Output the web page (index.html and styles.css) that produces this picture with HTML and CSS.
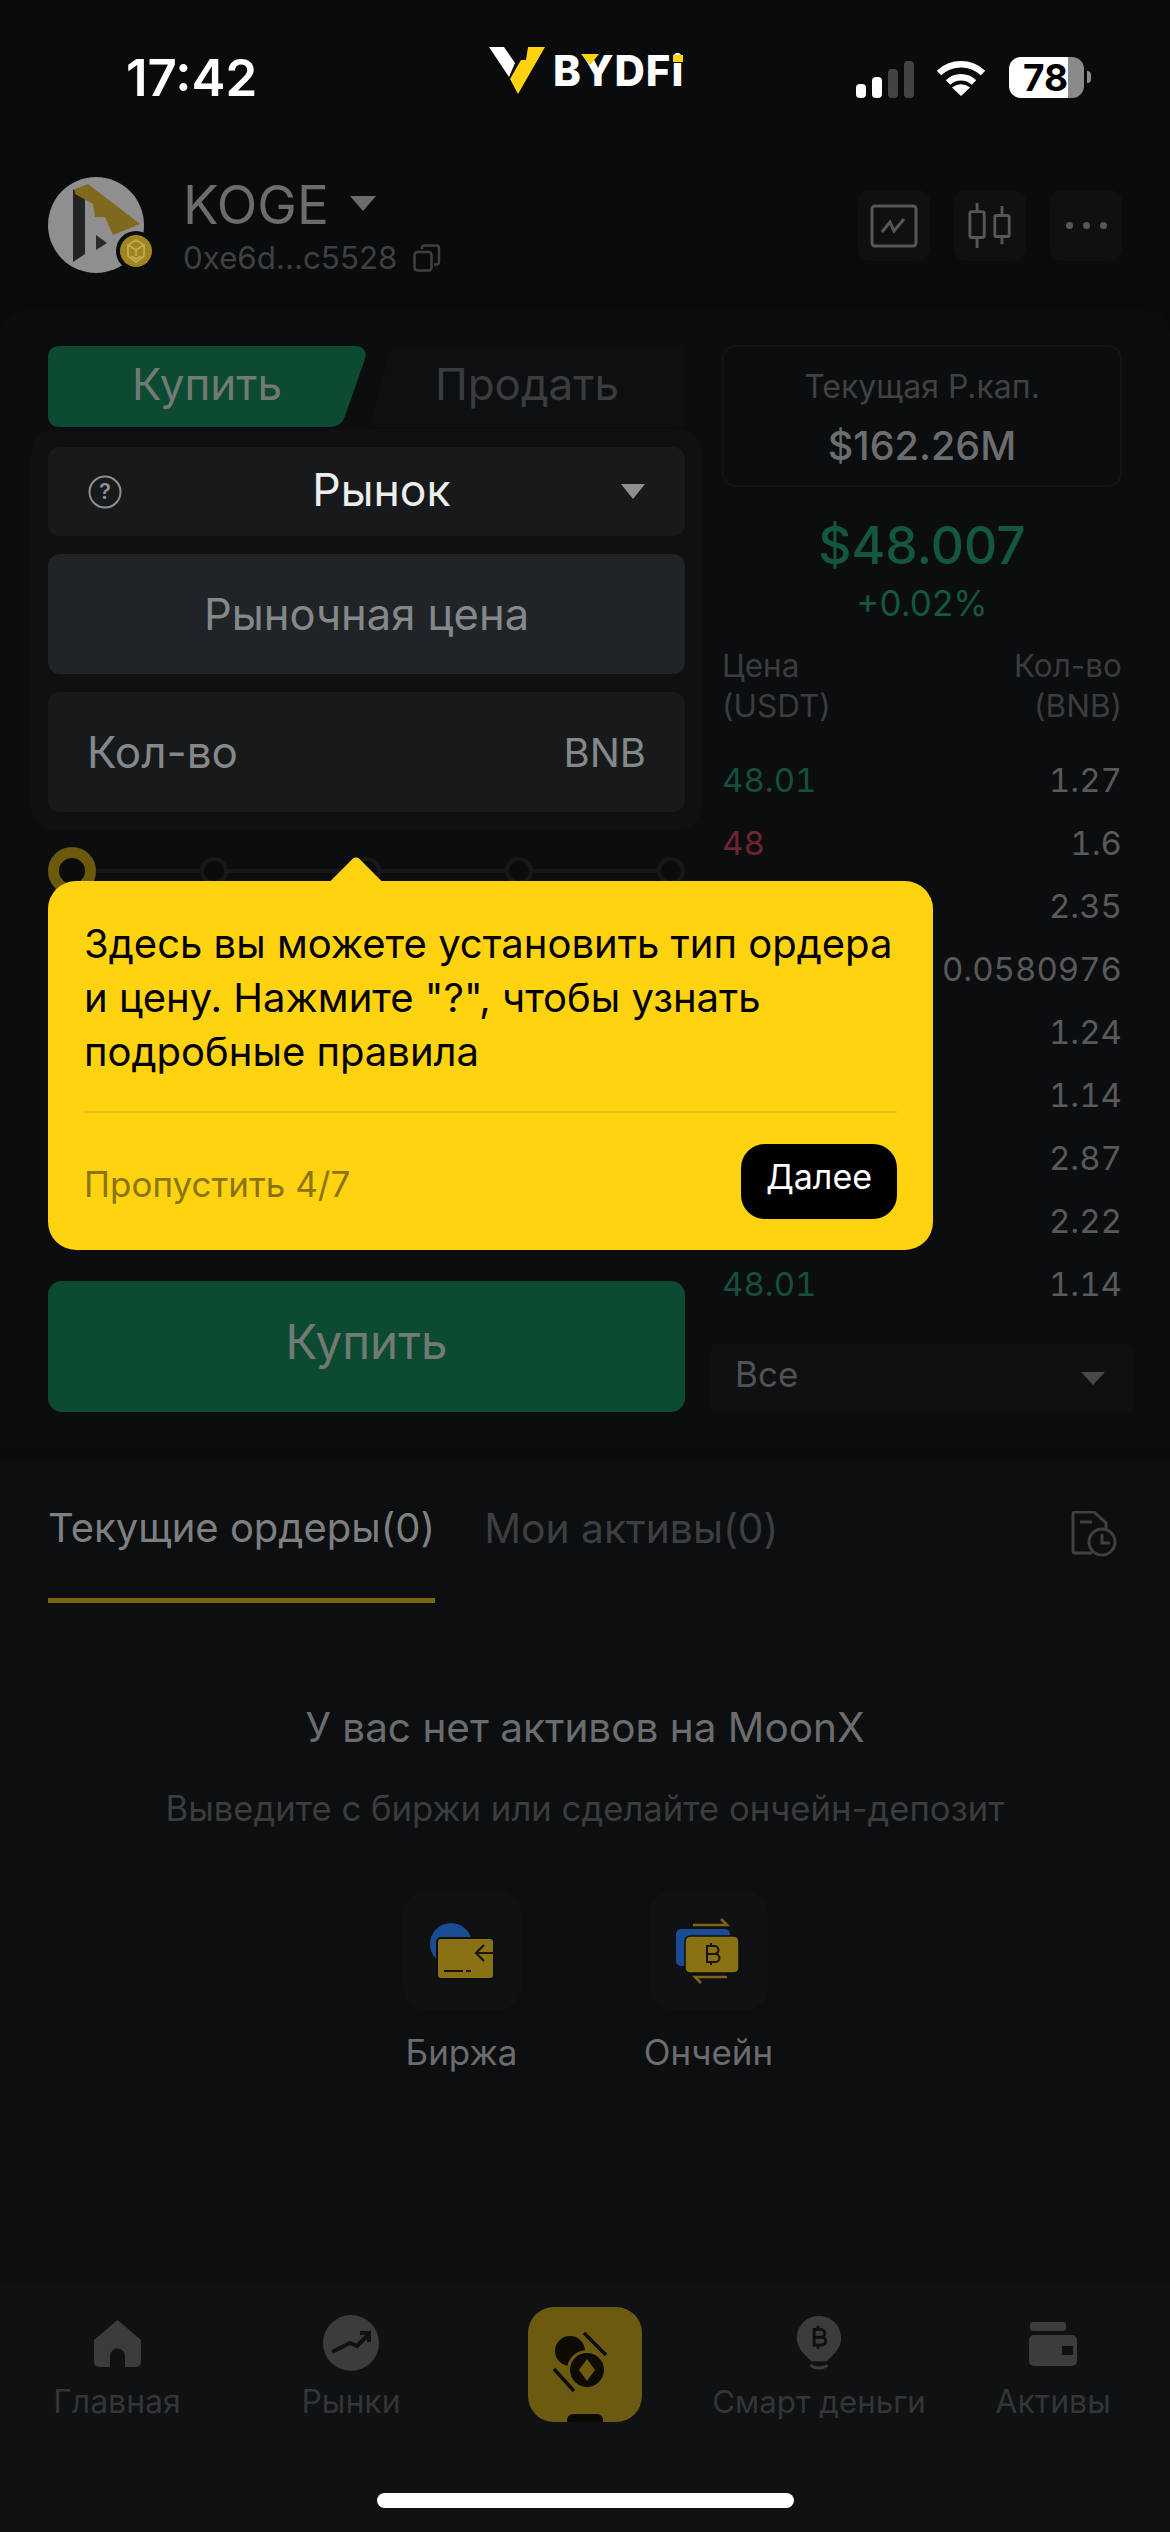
FILE: index.html
```html
<!DOCTYPE html>
<html lang="ru">
<head>
<meta charset="utf-8">
<title>BYDFi</title>
<link rel="stylesheet" href="styles.css">
</head>
<body>
<div class="screen">
  <div class="status">
    <div class="time">17:42</div>
    <div class="logo">
      <svg class="logo-mark" viewBox="0 0 56 48"><polygon fill="#fff" points="0,1 15,1 26,17 20,31"/><polygon fill="#ffd30f" points="39,1 56,1 29,48 21,33 32,14 37,14"/></svg>
      <span class="logo-text">BYDFi</span>
      <svg class="logo-y" viewBox="0 0 18 11"><polygon fill="#ffd30f" points="0,0 18,0 9,11"/></svg>
      <i class="logo-dot"></i>
    </div>
    <div class="sys">
      <div class="bars"><i class="b1"></i><i class="b2"></i><i class="b3"></i><i class="b4"></i></div>
      <svg class="wifi" viewBox="0 0 50 38"><path d="M3 15A32 32 0 0 1 47 15M12 24.500A19 19 0 0 1 38 24.500" fill="none" stroke="#fff" stroke-width="6.500"/><path d="M25 38L16 29.500Q25 23 34 29.500Z" fill="#fff"/></svg>
      <div class="battery"><span class="battery-num">78</span></div>
      <i class="nub"></i>
    </div>
  </div>

  <header class="head">
    <div class="avatar">
      <svg class="avatar-img" viewBox="0 0 96 96"><circle cx="48" cy="48" r="48" fill="#8f8f8f"/><polygon fill="#232323" points="25,12 37,22 37,77 25,85"/><polygon fill="#7f6a1c" points="27,12 40,7 92,47 65,58 57,40 47,40 45,27 27,17"/><polygon fill="#2b2b2b" points="48,58 59,66 48,73"/></svg>
      <svg class="badge" viewBox="0 0 40 40"><circle cx="20" cy="20" r="20" fill="#0a0b0c"/><circle cx="20" cy="20" r="16" fill="#9f8420"/><path d="M20 9l8 5v11l-8 6-8-6V14zM12 14l8 5 8-5M20 19v6M15 25l5 3 5-3" fill="none" stroke="#c3ab52" stroke-width="1.800"/></svg>
    </div>
    <div class="coin">
      <div class="coin-row"><span class="coin-name">KOGE</span><i class="tri tri-coin"></i></div>
      <div class="coin-row addr-row"><span class="addr">0xe6d...c5528</span>
        <svg class="copy" viewBox="0 0 28 28"><rect x="1.500" y="8" width="17" height="18.500" rx="3" fill="none" stroke="#3e4042" stroke-width="2.500"/><path d="M9 5V4a2.500 2.500 0 0 1 2.500-2.500h12A2.500 2.500 0 0 1 26 4v14a2.500 2.500 0 0 1-2.500 2.500H21" fill="none" stroke="#3e4042" stroke-width="2.500"/></svg>
      </div>
    </div>
    <div class="tools">
      <div class="tool"><svg viewBox="0 0 48 44"><rect x="2" y="2" width="44" height="40" rx="3" fill="none" stroke="#55575a" stroke-width="3"/><path d="M12 28L20 18L24 27L34 15" fill="none" stroke="#55575a" stroke-width="3"/></svg></div>
      <div class="tool"><svg viewBox="0 0 48 48"><g fill="none" stroke="#55575a" stroke-width="3"><rect x="3" y="9" width="15" height="27" rx="2"/><rect x="29" y="13" width="15" height="22" rx="2"/><path d="M10.500 0V9M10.500 36V47M36.500 3V13M36.500 35V43"/></g></svg></div>
      <div class="tool tool-dots"><i></i><i></i><i></i></div>
    </div>
  </header>

  <section class="panel">
    <div class="left">
      <div class="side-tabs">
        <div class="tab-buy">Купить</div>
        <div class="tab-sell">Продать</div>
      </div>
      <div class="form">
        <div class="market">
          <svg class="help" viewBox="0 0 34 34"><circle cx="17" cy="17" r="15.500" fill="none" stroke="#8d9092" stroke-width="2"/><text x="17" y="24" text-anchor="middle" class="help-q">?</text></svg>
          <span class="market-name">Рынок</span>
          <i class="tri tri-market"></i>
        </div>
        <div class="field field-price">Рыночная цена</div>
        <div class="field field-qty"><span>Кол-во</span><span class="unit">BNB</span></div>
      </div>
      <div class="slider">
        <i class="ring"></i><i class="dot"></i><i class="dot"></i><i class="dot"></i><i class="dot"></i>
      </div>
      <div class="buy-btn">Купить</div>
    </div>

    <div class="right">
      <div class="mcap">
        <div class="mcap-label">Текущая Р.кап.</div>
        <div class="mcap-value">$162.26M</div>
      </div>
      <div class="price">$48.007</div>
      <div class="change">+0.02%</div>
      <div class="book-head">
        <div>Цена<br>(USDT)</div>
        <div class="num">Кол-во<br>(BNB)</div>
      </div>
      <div class="book">
        <div class="row"><span class="up">48.01</span><span>1.27</span></div>
        <div class="row"><span class="down">48</span><span>1.6</span></div>
        <div class="row row-end"><span>2.35</span></div>
        <div class="row row-end"><span>0.0580976</span></div>
        <div class="row row-end"><span>1.24</span></div>
        <div class="row row-end"><span>1.14</span></div>
        <div class="row row-end"><span>2.87</span></div>
        <div class="row row-end"><span>2.22</span></div>
        <div class="row"><span class="up">48.01</span><span>1.14</span></div>
      </div>
      <div class="select"><span>Все</span><i class="tri tri-select"></i></div>
    </div>

    <div class="tip">
      <p class="tip-text">Здесь вы можете установить тип ордера<br>и цену. Нажмите "?", чтобы узнать<br>подробные правила</p>
      <div class="tip-foot">
        <span class="skip">Пропустить 4/7</span>
        <span class="next">Далее</span>
      </div>
    </div>
  </section>

  <section class="orders">
    <div class="order-tabs">
      <span class="otab otab-on">Текущие ордеры(0)</span>
      <span class="otab otab-off">Мои активы(0)</span>
      <svg class="history" viewBox="0 0 46 46"><path d="M21 42H4a2 2 0 0 1-2-2V3a2 2 0 0 1 2-2h19l12 11v5" fill="none" stroke="#3e4042" stroke-width="3"/><path d="M9 11h12" stroke="#3e4042" stroke-width="3"/><circle cx="31" cy="31" r="13" fill="none" stroke="#3e4042" stroke-width="3"/><path d="M31 23v9h8" fill="none" stroke="#3e4042" stroke-width="3"/></svg>
    </div>
    <div class="empty-title">У вас нет активов на MoonX</div>
    <div class="empty-sub">Выведите с биржи или сделайте ончейн-депозит</div>
    <div class="sources">
      <div class="source">
        <div class="source-card"><svg viewBox="0 0 118 118"><circle cx="48" cy="53" r="21" fill="#1b4c93"/><rect x="34" y="47" width="57" height="41" rx="4" fill="#8a7214" stroke="#0d0e10" stroke-width="2"/><path d="M91 62H73M81 54l-8 8 8 8M41 80h19M63 80h5" fill="none" stroke="#17150a" stroke-width="2.200"/></svg></div>
        <div class="source-label">Биржа</div>
      </div>
      <div class="source">
        <div class="source-card"><svg viewBox="0 0 118 118"><path d="M43 34H77l-6-6M77 86H45l6 6" fill="none" stroke="#7c6718" stroke-width="2.500"/><rect x="26" y="38" width="54" height="37" rx="5" fill="#1b4c93"/><rect x="35" y="45" width="54" height="37" rx="5" fill="#8a7214" stroke="#0d0e10" stroke-width="1.500"/><path d="M57 55h7.500a3.500 3.500 0 0 1 0 8H57h8.500a3.500 3.500 0 0 1 0 8H57zM61 52v3M61 71v3" fill="none" stroke="#17150a" stroke-width="2"/></svg></div>
        <div class="source-label">Ончейн</div>
      </div>
    </div>
  </section>

  <nav class="nav">
    <div class="nav-item">
      <svg class="nav-icon ni-home" viewBox="0 0 47 47"><path d="M23.500 0L47 20V42a5 5 0 0 1-5 5H31V36a7.500 7.500 0 0 0-15 0V47H5a5 5 0 0 1-5-5V20z" fill="#3a3c3e"/></svg>
      <div class="nav-label">Главная</div>
    </div>
    <div class="nav-item">
      <svg class="nav-icon ni-market" viewBox="0 0 56 56"><circle cx="28" cy="28" r="28" fill="#3a3c3e"/><path d="M9 37l18-9 7 3 11-11M37 18h9v9" fill="none" stroke="#0e1011" stroke-width="4"/></svg>
      <div class="nav-label">Рынки</div>
    </div>
    <div class="nav-item">
      <div class="moon">
        <svg class="moon-icon" viewBox="0 0 70 70"><circle cx="20" cy="22" r="15" fill="#0d0b04"/><circle cx="37" cy="41" r="20" fill="#6b5a10"/><circle cx="37" cy="41" r="17" fill="#0d0b04"/><polygon fill="#6b5a10" points="37,30 45,41 37,52 29,41"/><path d="M34 4L56 26M4 40L24 62" stroke="#0d0b04" stroke-width="3.500"/></svg>
        <i class="moon-notch"></i>
      </div>
    </div>
    <div class="nav-item">
      <svg class="nav-icon ni-bulb" viewBox="0 0 46 56"><path d="M23 0C36 0 46 10 46 23 46 33 38 40 31 47H15C8 40 0 33 0 23 0 10 10 0 23 0Z" fill="#3a3c3e"/><path d="M14 51Q23 57 32 51" fill="none" stroke="#3a3c3e" stroke-width="3"/><path d="M18 14h7a4 4 0 0 1 0 8H18h8a4 4 0 0 1 0 8H18zM22 10v4M22 30v4" fill="none" stroke="#0e1011" stroke-width="3"/></svg>
      <div class="nav-label nav-label-low">Смарт деньги</div>
    </div>
    <div class="nav-item">
      <svg class="nav-icon ni-wallet" viewBox="0 0 48 44"><rect x="1" y="0" width="36" height="9" rx="3" fill="#3a3c3e"/><path d="M5 13H43a5 5 0 0 1 5 5V39a5 5 0 0 1-5 5H5a5 5 0 0 1-5-5V18a5 5 0 0 1 5-5Z" fill="#3a3c3e"/><rect x="33" y="24" width="11" height="9" fill="#0e1011"/></svg>
      <div class="nav-label">Активы</div>
    </div>
    <div class="home-bar"></div>
  </nav>
</div>
</body>
</html>
```
FILE: styles.css
```css
* { box-sizing: border-box; }
html, body { margin: 0; padding: 0; background: #0a0b0c; }
body { font-family: Inter, "Liberation Sans", sans-serif; }
i { display: block; }
.screen { width: 1170px; height: 2532px; overflow: hidden; display: flex; flex-direction: column; background: #0a0b0c; }

/* status bar */
.status { height: 160px; flex: none; display: flex; align-items: flex-start; position: relative; }
.time { margin: 50px 0 0 126px; font-size: 51px; line-height: 56px; font-weight: 600; color: #fff; }
.logo { position: absolute; left: 489px; top: 46px; width: 200px; height: 48px; }
.logo-mark { width: 56px; height: 48px; display: block; }
.logo-text { position: absolute; left: 64px; top: 2px; font-size: 42px; line-height: 46px; font-weight: 800; color: #fff; letter-spacing: 1px; }
.logo-y { position: absolute; left: 92px; top: 8px; width: 18px; height: 11px; }
.logo-dot { position: absolute; left: 184px; top: 9px; width: 10px; height: 7px; background: #ffd30f; }
.sys { position: absolute; left: 856px; top: 57px; display: flex; align-items: flex-end; height: 41px; }
.bars { display: flex; align-items: flex-end; gap: 6px; height: 39px; margin-right: 22px; }
.bars i { width: 10px; border-radius: 4px; background: #fff; }
.bars .b1 { height: 14px; }
.bars .b2 { height: 21px; }
.bars .b3 { height: 29px; background: #434343; }
.bars .b4 { height: 37px; background: #434343; }
.wifi { width: 50px; height: 38px; margin-right: 23px; margin-bottom: 2px; }
.battery { width: 75px; height: 41px; border-radius: 12px; background: linear-gradient(90deg, #fff 0 59px, #8a8a8a 59px 75px); display: flex; align-items: center; padding-left: 14px; }
.battery-num { font-size: 37px; line-height: 41px; font-weight: 700; color: #000; }
.nub { width: 4px; height: 12px; margin: 0 0 15px 3px; border-radius: 0 4px 4px 0; background: #8a8a8a; }

/* header */
.head { height: 150px; flex: none; display: flex; padding: 17px 48px 0; }
.avatar { width: 96px; height: 96px; position: relative; flex: none; }
.avatar-img { width: 96px; height: 96px; display: block; }
.badge { position: absolute; left: 68px; top: 54px; width: 40px; height: 40px; }
.coin { margin-left: 39px; flex: 1; }
.coin-row { display: flex; align-items: center; }
.coin-name { font-size: 53px; line-height: 56px; font-weight: 400; color: #6a6c6e; }
.addr-row { margin-top: 5px; gap: 16px; }
.addr { font-size: 31.300px; line-height: 40px; color: #3e4042; }
.copy { width: 28px; height: 28px; }
.tri { width: 0; height: 0; border-style: solid; border-color: transparent; border-bottom-width: 0; }
.tri-coin { margin-left: 21px; margin-top: -4px; border-width: 15px 13px 0; border-top-color: #6a6c6e; }
.tools { display: flex; gap: 24px; margin-top: 13px; }
.tool { width: 72px; height: 71px; border-radius: 12px; background: #0f1011; display: flex; align-items: center; justify-content: center; }
.tool svg { width: 48px; height: 46px; }
.tool-dots { gap: 10px; }
.tool-dots i { width: 7px; height: 7px; border-radius: 50%; background: #55575a; }

/* trade panel */
.panel { height: 1137px; flex: none; padding: 36px 48px 0; display: grid; grid-template-columns: 637px 400px; column-gap: 37px; position: relative; background: #0c0d0e; border-radius: 24px 24px 0 0; align-content: start; }
.side-tabs { display: flex; height: 81px; gap: 3px; font-size: 44px; line-height: 76px; text-align: center; }
.tab-buy { width: 318px; height: 81px; background: #0d4a32; color: #717a74; clip-path: path("M12 0H306Q320 0 317 13L297 70Q293 81 283 81H12Q0 81 0 69V12Q0 0 12 0Z"); }
.tab-sell { flex: 1; color: #3a3c3e; background: #0e0f10; clip-path: polygon(22px 0, 100% 0, 100% 100%, 0 100%); }
.form { margin: 2px -17px 0; padding: 18px 17px; background: #0e1012; border-radius: 24px; display: flex; flex-direction: column; gap: 18px; }
.market { height: 89px; border-radius: 12px; background: #17191b; padding: 0 40px; display: flex; align-items: center; justify-content: space-between; }
.help { width: 34px; height: 34px; }
.help-q { font-size: 22px; font-weight: 600; fill: #8d9092; }
.market-name { font-size: 44.500px; line-height: 80px; margin-bottom: 4px; margin-left: 20px; color: #eceded; }
.tri-market { border-width: 15px 12px 0; border-top-color: #8d9092; }
.field { height: 120px; border-radius: 12px; font-size: 44px; color: #85888a; display: flex; align-items: center; }
.field-price { background: #212427; justify-content: center; font-size: 43.500px; }
.field-qty { background: #17191b; padding: 0 39px; justify-content: space-between; }
.unit { font-size: 40px; }
.slider { height: 48px; margin-top: 17px; display: flex; align-items: center; justify-content: space-between; background: linear-gradient(#17181a, #17181a) center / 100% 4px no-repeat; }
.ring { width: 48px; height: 48px; margin-right: -20px; border: 11px solid #6b5a0c; border-radius: 50%; background: #0a0b0c; }
.dot { width: 28px; height: 28px; border: 4px solid #17181a; border-radius: 50%; background: #0a0b0c; }
.buy-btn { height: 131px; margin-top: 386px; border-radius: 14px; background: #0d4a32; color: #717a74; font-size: 47.500px; line-height: 122px; text-align: center; }

.right { margin-top: -1px; }
.mcap { height: 142px; border: 2px solid #131416; border-radius: 14px; text-align: center; padding-top: 20px; }
.mcap-label { font-size: 32px; line-height: 40px; color: #3f4143; }
.mcap-value { margin-top: 17px; font-size: 39.500px; line-height: 44px; font-weight: 500; color: #6b6d6f; }
.price { margin-top: 27px; font-size: 51.500px; line-height: 62px; font-weight: 500; color: #14573f; text-align: center; }
.change { margin-top: 7px; font-size: 35px; line-height: 40px; color: #14573f; text-align: center; }
.book-head { margin-top: 23px; display: flex; justify-content: space-between; font-size: 31.500px; line-height: 40px; color: #3a3c3e; }
.num { text-align: right; }
.book { margin-top: 22px; }
.row { height: 63px; display: flex; justify-content: space-between; align-items: center; font-size: 33px; font-variant-numeric: tabular-nums; color: #58595b; }
.row-end { justify-content: flex-end; }
.up { color: #14503b; }
.down { color: #6e2433; }
.select { margin: 29px -11px 0 -12px; height: 69px; border-radius: 8px; background: #0f1012; padding: 0 28px 0 25px; display: flex; align-items: center; justify-content: space-between; font-size: 35px; line-height: 60px; color: #505254; }
.select span { margin-bottom: 10px; }
.tri-select { border-width: 13px 12px 0; border-top-color: #48494b; }

/* tooltip */
.tip { position: absolute; left: 48px; top: 571px; width: 885px; height: 369px; border-radius: 28px; background: #ffd30f; padding: 36px 36px 0; color: #000; }
.tip::before { content: ""; position: absolute; left: 290px; top: -18px; width: 36px; height: 36px; background: #ffd30f; transform: rotate(45deg); border-radius: 5px 0 0 0; }
.tip-text { position: relative; margin: 0; font-size: 40px; line-height: 54px; white-space: nowrap; }
.tip-foot { margin-top: 32px; border-top: 2px solid #e6bf10; display: flex; justify-content: space-between; height: 108px; padding-top: 31px; }
.skip { font-size: 35px; line-height: 48px; margin-top: 16px; color: #8a7410; }
.next { width: 156px; height: 75px; border-radius: 24px; background: #000; color: #fff; font-size: 34px; line-height: 66px; text-align: center; }

/* orders */
.orders { height: 823px; flex: none; margin-top: 13px; padding: 43px 48px 0; background: #0d0e0f; position: relative; }
.order-tabs { display: flex; gap: 49px; position: relative; height: 100px; }
.otab { font-size: 40px; line-height: 50px; color: #3c3e40; }
.otab-off { font-size: 40.800px; }
.otab-on { color: #7d7f81; height: 100px; border-bottom: 5px solid #7a6512; }
.history { position: absolute; right: 5px; top: 8px; width: 46px; height: 46px; }
.empty-title { margin-top: 100px; font-size: 40.500px; line-height: 50px; color: #6a6c6e; text-align: center; }
.empty-sub { margin-top: 33px; font-size: 34.700px; line-height: 44px; color: #3a3c3e; text-align: center; }
.sources { margin-top: 61px; display: flex; justify-content: center; gap: 127px; }
.source { width: 120px; display: flex; flex-direction: column; align-items: center; }
.source-card { width: 118px; height: 119px; border-radius: 22px; background: #0f1113; }
.source-card svg { width: 118px; height: 118px; display: block; }
.source-label { margin-top: 20px; font-size: 35px; line-height: 44px; color: #6a6c6e; white-space: nowrap; }

/* nav */
.nav { flex: 1; background: #0f1112; display: flex; align-items: flex-start; position: relative; }
.nav-item { width: 234px; height: 139px; padding-top: 30px; display: flex; flex-direction: column; align-items: center; }
.nav-icon { height: 60px; display: block; }
.ni-home { width: 47px; height: 47px; margin: 7px 0 6px; }
.ni-market { width: 56px; height: 56px; margin: 2px 0; }
.ni-bulb { width: 46px; height: 56px; margin: 3px 0 1px; }
.ni-wallet { width: 48px; height: 44px; margin: 9px 0 7px; }
.nav-label { margin-top: 9px; font-size: 32px; line-height: 40px; color: #333537; white-space: nowrap; }
.nav-label-low { margin-top: 11px; font-size: 31.300px; }
.moon { width: 114px; height: 115px; margin-top: -6px; border-radius: 26px; background: #6b5a10; position: relative; display: flex; justify-content: center; padding-top: 22px; overflow: hidden; }
.moon-icon { width: 70px; height: 70px; }
.moon-notch { position: absolute; left: 39px; bottom: 0; width: 36px; height: 8px; background: #0a0903; border-radius: 6px 6px 0 0; }
.home-bar { position: absolute; left: 377px; top: 210px; width: 417px; height: 15px; border-radius: 8px; background: #fff; }
```
